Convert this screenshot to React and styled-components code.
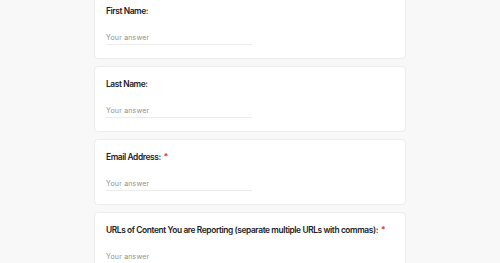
import React from "react";
import styled, { createGlobalStyle } from "styled-components";

const Global = createGlobalStyle`
  html, body { margin: 0; padding: 0; background: #f8f8f8; }
  body { font-family: Inter, "Noto Sans", sans-serif; }
`;

const Page = styled.div`
  width: 312px;
  margin: -7px auto 0;
  display: flex;
  flex-direction: column;
  gap: 7px;
`;

const Card = styled.section`
  box-sizing: border-box;
  background: #fff;
  border: 1px solid #ececec;
  border-radius: 4px;
  height: 66px;
  padding: 11px 11px 0;
  display: flex;
  flex-direction: column;
`;

const Title = styled.div`
  font-size: 8.4px;
  font-weight: 600;
  line-height: 12px;
  color: #202124;
  letter-spacing: -0.4px;
  white-space: nowrap;
`;

const Star = styled.span`
  color: #d93025;
  margin-left: 3px;
`;

const Input = styled.div`
  margin-top: 15px;
  width: 146px;
  height: 12px;
  line-height: 12px;
  font-size: 7px;
  color: #8f8f8f;
  letter-spacing: 0.2px;
  border-bottom: 1px solid #ececec;
`;

const fields = [
  { label: "First Name:" },
  { label: "Last Name:" },
  { label: "Email Address:", required: true },
  { label: "URLs of Content You are Reporting (separate multiple URLs with commas):", required: true },
];

export default function App() {
  return (
    <>
      <Global />
      <Page>
        {fields.map((f) => (
          <Card key={f.label}>
            <Title>
              {f.label}
              {f.required && <Star>*</Star>}
            </Title>
            <Input>Your answer</Input>
          </Card>
        ))}
      </Page>
    </>
  );
}
